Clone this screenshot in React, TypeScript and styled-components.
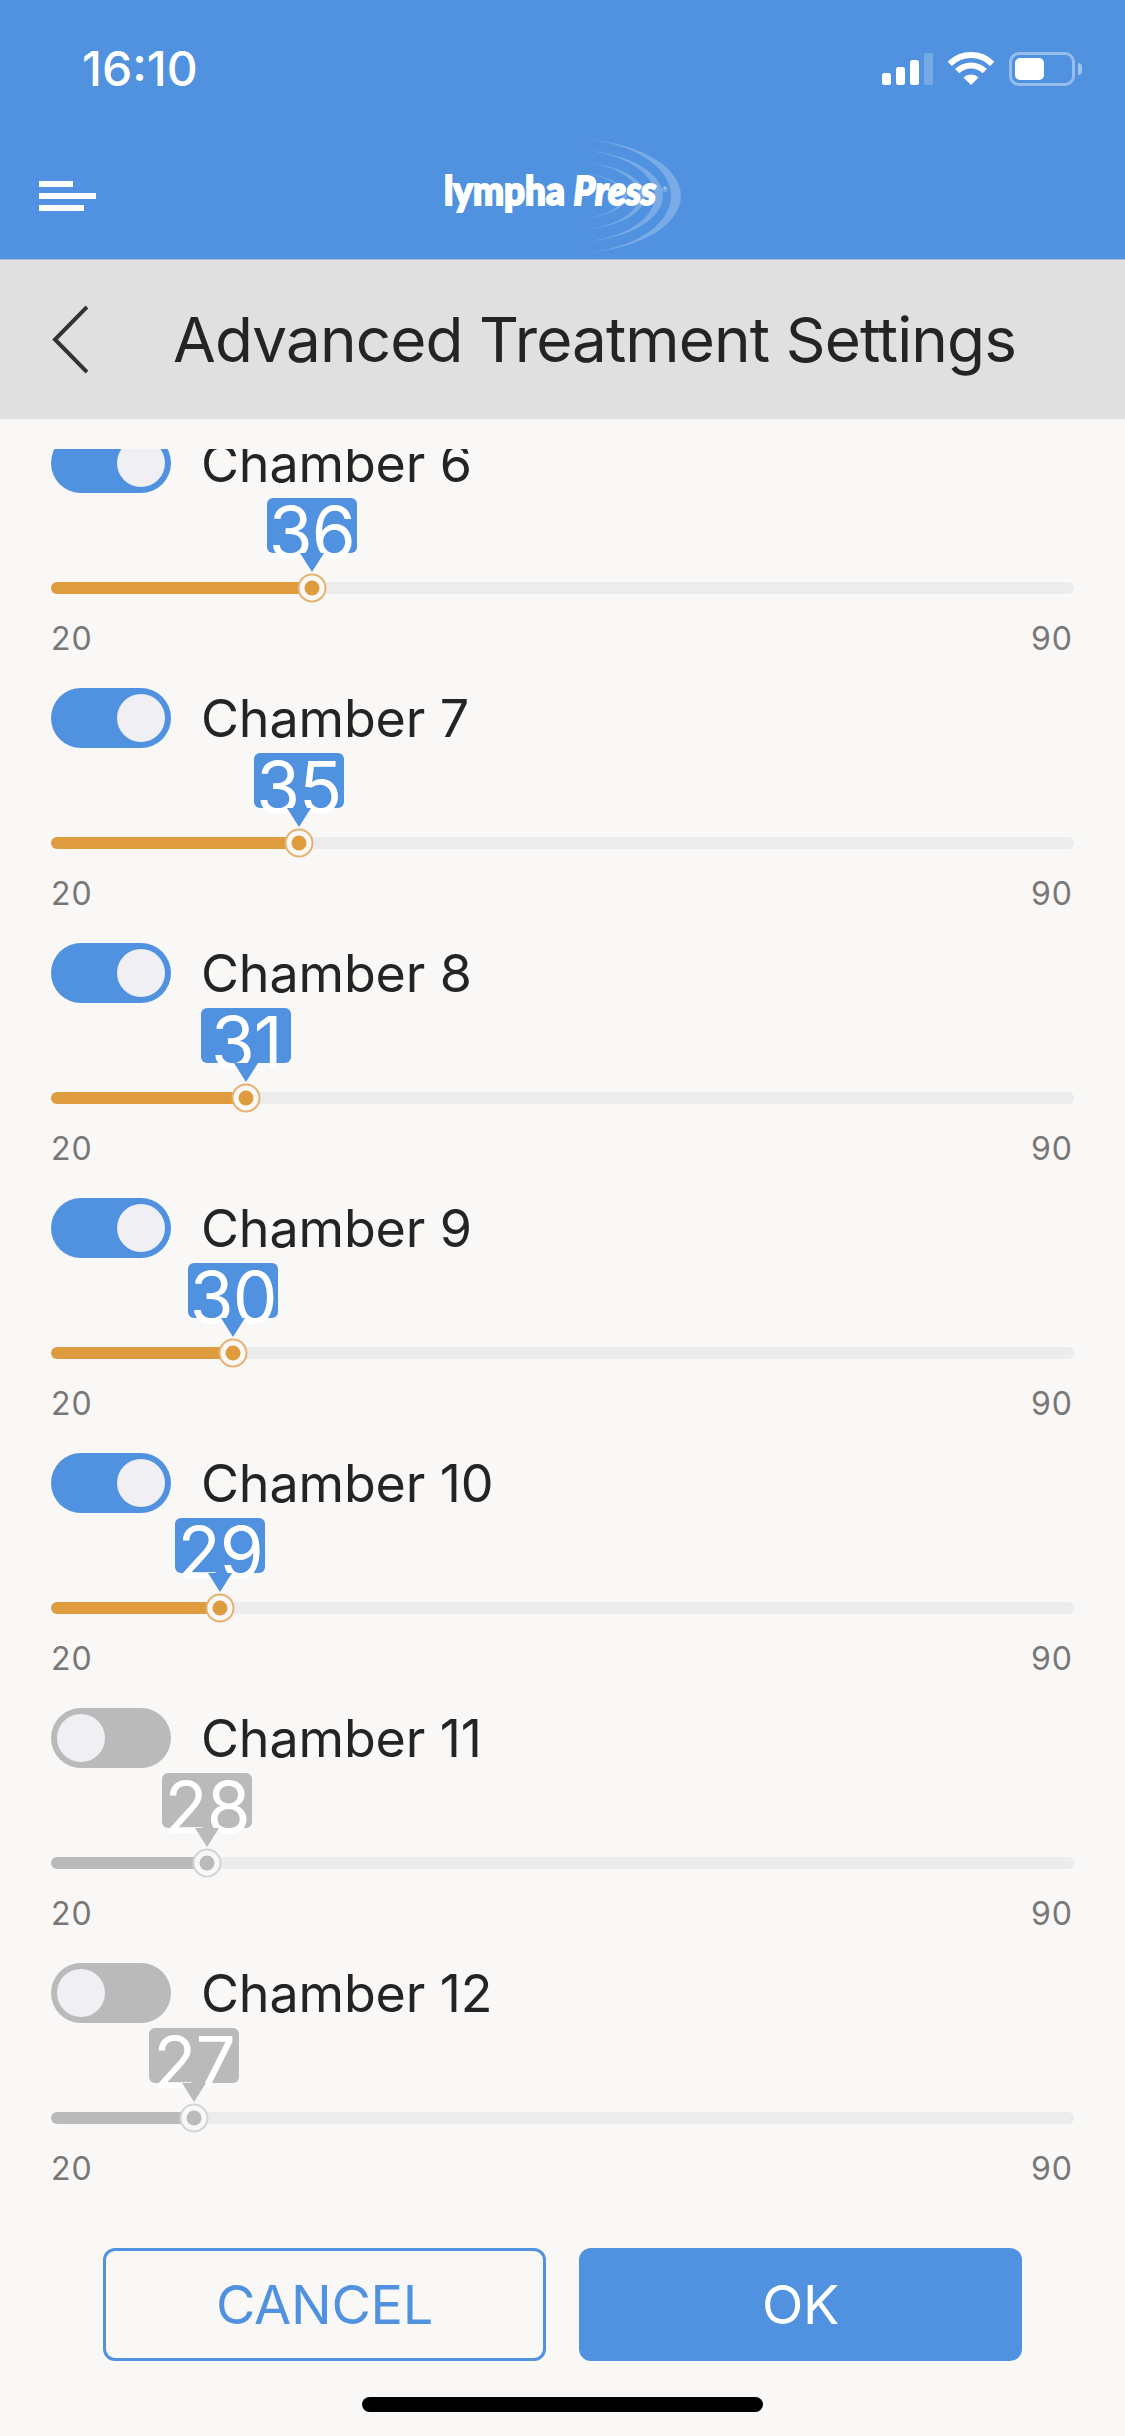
import React from "react";
import styled, { createGlobalStyle } from "styled-components";

const BLUE = "#5092e0";
const ORANGE = "#df9c3f";
const GREY = "#bababa";

const chambers = [
  { name: "Chamber 6", value: 36, on: true },
  { name: "Chamber 7", value: 35, on: true },
  { name: "Chamber 8", value: 31, on: true },
  { name: "Chamber 9", value: 30, on: true },
  { name: "Chamber 10", value: 29, on: true },
  { name: "Chamber 11", value: 28, on: false },
  { name: "Chamber 12", value: 27, on: false },
];

// thumb offset inside the track, taken from the value
const thumbOffset = (value: number) => 156 + (value - 28) * 13.1;

const GlobalStyle = createGlobalStyle`
  html, body {
    margin: 0;
    padding: 0;
    background: #faf8f6;
    font-family: Inter, "Liberation Sans", sans-serif;
  }
`;

const Screen = styled.div`
  width: 1125px;
  height: 2436px;
  display: flex;
  flex-direction: column;
  overflow: hidden;
  background: #faf8f6;
`;

const Header = styled.header`
  height: 260px;
  box-sizing: border-box;
  flex: none;
  background: ${BLUE};
  border-bottom: 1px solid #a9bcd4;
  display: flex;
  flex-direction: column;
`;

const StatusBar = styled.div`
  height: 139px;
  box-sizing: border-box;
  padding: 42px 50px 0 82px;
  display: flex;
  justify-content: space-between;
  align-items: flex-start;
`;

const Time = styled.span`
  font-size: 48px;
  line-height: 54px;
  font-weight: 500;
  color: #fff;
`;

const StatusIcons = styled.div`
  display: flex;
  align-items: flex-start;
  margin-top: 10px;
  gap: 15px;
`;

const Signal = styled.div`
  display: flex;
  align-items: flex-end;
  gap: 5px;
  height: 33px;
`;

const SignalBar = styled.div<{ $h: number; $dim?: boolean }>`
  width: 9px;
  height: ${(p) => p.$h}px;
  border-radius: 2.5px;
  background: ${(p) => (p.$dim ? "rgba(255,255,255,0.22)" : "#fff")};
`;

const Battery = styled.div`
  position: relative;
  width: 66px;
  height: 34px;
  box-sizing: border-box;
  border: 3px solid rgba(255, 255, 255, 0.4);
  border-radius: 10px;
  padding: 3px;
  &::after {
    content: "";
    position: absolute;
    right: -10px;
    top: 8px;
    width: 4px;
    height: 12px;
    border-radius: 0 4px 4px 0;
    background: rgba(255, 255, 255, 0.45);
  }
`;

const BatteryFill = styled.div`
  width: 29px;
  height: 22px;
  background: #fff;
  border-radius: 5px;
`;

const NavBar = styled.div`
  position: relative;
  flex: 1;
  display: flex;
  align-items: flex-start;
  padding-left: 39px;
`;

const Menu = styled.div`
  margin-top: 42px;
  display: flex;
  flex-direction: column;
  gap: 6px;
`;

const MenuLine = styled.div<{ $w: number }>`
  width: ${(p) => p.$w}px;
  height: 6px;
  background: #fff;
`;

const Logo = styled.svg`
  position: absolute;
  left: 440px;
  top: 0;
`;

const TitleBar = styled.div`
  height: 159px;
  flex: none;
  background: #e0e0e0;
  display: flex;
  align-items: center;
  padding-left: 52px;
  gap: 85px;
`;

const Title = styled.h1`
  margin: 0;
  font-size: 62px;
  font-weight: 400;
  letter-spacing: -0.88px;
  color: #242424;
  white-space: nowrap;
`;

const Body = styled.main`
  flex: 1;
  margin-top: 30px;
  overflow: hidden;
`;

const List = styled.div`
  margin-top: -16px;
  padding: 0 51px;
`;

const Row = styled.section`
  height: 255px;
  display: flex;
  flex-direction: column;
`;

const RowHead = styled.div`
  display: flex;
  align-items: center;
  gap: 30px;
  height: 60px;
`;

const Toggle = styled.div<{ $on: boolean }>`
  width: 120px;
  height: 60px;
  box-sizing: border-box;
  padding: 6px;
  border-radius: 30px;
  display: flex;
  justify-content: ${(p) => (p.$on ? "flex-end" : "flex-start")};
  background: ${(p) => (p.$on ? BLUE : GREY)};
`;

const Knob = styled.div`
  width: 48px;
  height: 48px;
  border-radius: 50%;
  background: #efeff4;
`;

const Name = styled.span`
  font-size: 52px;
  letter-spacing: -0.15px;
  color: #242424;
  white-space: nowrap;
`;

const Track = styled.div`
  position: relative;
  height: 12px;
  margin-top: 89px;
  border-radius: 6px;
  background: #ececec;
`;

const Fill = styled.div<{ $on: boolean }>`
  height: 100%;
  border-radius: 6px 0 0 6px;
  background: ${(p) => (p.$on ? ORANGE : GREY)};
`;

const Thumb = styled.div<{ $on: boolean }>`
  position: absolute;
  top: 6px;
  width: 29px;
  height: 29px;
  box-sizing: border-box;
  transform: translate(-50%, -50%);
  border-radius: 50%;
  background: #faf8f6;
  border: 2px solid ${(p) => (p.$on ? "#e6b272" : "#d4d4d4")};
  display: flex;
  align-items: center;
  justify-content: center;
  &::after {
    content: "";
    width: 15px;
    height: 15px;
    border-radius: 50%;
    background: ${(p) => (p.$on ? ORANGE : GREY)};
  }
`;

const Bubble = styled.div<{ $on: boolean }>`
  position: absolute;
  bottom: 41px;
  width: 90px;
  height: 55px;
  transform: translateX(-50%);
  border-radius: 6px;
  background: ${(p) => (p.$on ? BLUE : GREY)};
  color: #fff;
  font-size: 71px;
  line-height: 68px;
  letter-spacing: -1px;
  text-align: center;
  &::after {
    content: "";
    position: absolute;
    left: 33px;
    top: 55px;
    border-style: solid;
    border-width: 19px 12px 0;
    border-color: ${(p) => (p.$on ? BLUE : GREY)} transparent transparent;
  }
`;

const Range = styled.div`
  display: flex;
  justify-content: space-between;
  padding: 0 1px 0 0;
  margin-top: 26px;
  font-size: 32px;
  line-height: 38px;
  letter-spacing: 1px;
  color: #777;
`;

const Footer = styled.footer`
  flex: none;
  height: 188px;
  padding: 0 103px;
  display: flex;
  justify-content: space-between;
  align-items: flex-start;
`;

const Button = styled.button<{ $primary?: boolean }>`
  width: 443px;
  height: 113px;
  box-sizing: border-box;
  border: 3px solid ${BLUE};
  border-radius: 12px;
  background: ${(p) => (p.$primary ? BLUE : "transparent")};
  color: ${(p) => (p.$primary ? "#fff" : BLUE)};
  font-family: inherit;
  font-size: 54px;
  letter-spacing: -0.3px;
`;

const HomeBar = styled.div`
  position: absolute;
  left: 362px;
  top: 2397px;
  width: 401px;
  height: 15px;
  border-radius: 8px;
  background: #000;
`;

const Wifi = () => (
  <svg width="46" height="33" viewBox="0 0 46 33" fill="none">
    <path d="M1.8 11.8A30 30 0 0 1 44.2 11.8" stroke="#fff" strokeWidth="6" />
    <path d="M9.2 19.2A19.5 19.5 0 0 1 36.8 19.2" stroke="#fff" strokeWidth="6" />
    <path d="M23 33L15.5 25.5A10.6 10.6 0 0 1 30.5 25.5Z" fill="#fff" />
  </svg>
);

const LymphaLogo = () => (
  <Logo width="260" height="121" viewBox="0 0 260 121">
    <g transform="translate(132 57)" fill="rgba(255,255,255,0.24)">
      <path d="M0-57A109 57 0 0 1 0 57A99 57 0 0 0 0-57Z" />
      <path d="M0-46A91 46 0 0 1 0 46A83 46 0 0 0 0-46Z" />
      <path d="M0-34A73 34 0 0 1 0 34A67 34 0 0 0 0-34Z" />
      <path d="M0-23A55 23 0 0 1 0 23A51 23 0 0 0 0-23Z" />
    </g>
    <text
      x="4"
      y="66"
      fontFamily="Lato, sans-serif"
      fontWeight="900"
      fontSize="40"
      fill="#fff"
      stroke="#fff"
      strokeWidth="2"
      textLength="212"
      lengthAdjust="spacingAndGlyphs"
    >
      lympha <tspan fontStyle="italic">Press</tspan>
    </text>
    <text x="222" y="53" fontFamily="Lato, sans-serif" fontSize="7" fill="rgba(255,255,255,0.7)">
      ®
    </text>
  </Logo>
);

const ChamberRow = ({ name, value, on }: { name: string; value: number; on: boolean }) => {
  const offset = thumbOffset(value);
  return (
    <Row>
      <RowHead>
        <Toggle $on={on}>
          <Knob />
        </Toggle>
        <Name>{name}</Name>
      </RowHead>
      <Track>
        <Fill $on={on} style={{ width: offset }} />
        <Bubble $on={on} style={{ left: offset }}>
          {value}
        </Bubble>
        <Thumb $on={on} style={{ left: offset }} />
      </Track>
      <Range>
        <span>20</span>
        <span>90</span>
      </Range>
    </Row>
  );
};

export default function App() {
  return (
    <Screen>
      <GlobalStyle />
      <Header>
        <StatusBar>
          <Time>16:10</Time>
          <StatusIcons>
            <Signal>
              <SignalBar $h={12} />
              <SignalBar $h={18} />
              <SignalBar $h={25} />
              <SignalBar $h={32} $dim />
            </Signal>
            <Wifi />
            <Battery>
              <BatteryFill />
            </Battery>
          </StatusIcons>
        </StatusBar>
        <NavBar>
          <Menu>
            <MenuLine $w={34} />
            <MenuLine $w={57} />
            <MenuLine $w={45} />
          </Menu>
          <LymphaLogo />
        </NavBar>
      </Header>
      <TitleBar>
        <svg width="36" height="69" viewBox="0 0 36 69" fill="none">
          <path d="M35 2L3 34.5L35 67" stroke="#333" strokeWidth="4" />
        </svg>
        <Title>Advanced Treatment Settings</Title>
      </TitleBar>
      <Body>
        <List>
          {chambers.map((c) => (
            <ChamberRow key={c.name} {...c} />
          ))}
        </List>
      </Body>
      <Footer>
        <Button>CANCEL</Button>
        <Button $primary>OK</Button>
      </Footer>
      <HomeBar />
    </Screen>
  );
}
